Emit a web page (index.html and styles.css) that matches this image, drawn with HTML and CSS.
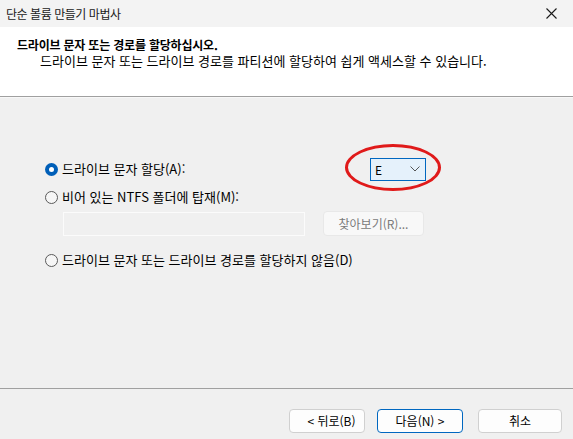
FILE: index.html
```html
<!DOCTYPE html>
<html lang="ko">
<head>
<meta charset="utf-8">
<title>단순 볼륨 만들기 마법사</title>
<link rel="stylesheet" href="styles.css">
</head>
<body>
<div class="window">
  <div class="titlebar">
    <span class="title">단순 볼륨 만들기 마법사</span>
    <span class="close">
      <svg width="11" height="11" viewBox="0 0 11 11"><path d="M0.5 0.5 L10.5 10.5 M10.5 0.5 L0.5 10.5" stroke="#1a1a1a" stroke-width="1.1" fill="none"/></svg>
    </span>
  </div>
  <div class="header">
    <div class="h-title">드라이브 문자 또는 경로를 할당하십시오.</div>
    <div class="h-sub">드라이브 문자 또는 드라이브 경로를 파티션에 할당하여 쉽게 액세스할 수 있습니다.</div>
  </div>
  <div class="content">
    <div class="row row1">
      <label class="opt"><span class="radio checked"></span><span>드라이브 문자 할당(A):</span></label>
      <div class="combo-wrap">
        <div class="combo"><span>E</span>
          <svg width="10" height="6" viewBox="0 0 10 6"><path d="M0.5 0.5 L5 5 L9.5 0.5" stroke="#555" stroke-width="1" fill="none"/></svg>
        </div>
        <div class="mark"></div>
      </div>
    </div>
    <div class="row row2">
      <label class="opt"><span class="radio"></span><span>비어 있는 NTFS 폴더에 탑재(M):</span></label>
    </div>
    <div class="row row-path">
      <div class="path"></div>
      <div class="btn disabled">찾아보기(R)...</div>
    </div>
    <div class="row row3">
      <label class="opt"><span class="radio"></span><span>드라이브 문자 또는 드라이브 경로를 할당하지 않음(D)</span></label>
    </div>
  </div>
  <div class="footer">
    <div class="btn b-back">&lt; 뒤로(B)</div>
    <div class="btn b-next">다음(N) &gt;</div>
    <div class="btn b-cancel">취소</div>
  </div>
</div>
</body>
</html>
```
FILE: styles.css
```css
* { box-sizing: border-box; }
html, body { margin: 0; padding: 0; }
body {
  width: 573px;
  height: 439px;
  overflow: hidden;
  font-family: "Noto Sans CJK KR", "Noto Sans", sans-serif;
  font-size: 12px;
  color: #000;
  background: #f0f0f0;
}
.window { display: flex; flex-direction: column; width: 573px; height: 439px; }
.titlebar {
  height: 27px;
  background: #f3f3f3;
  display: flex;
  align-items: center;
  justify-content: space-between;
  padding: 0 16px 0 6px;
}
.title { font-size: 12px; line-height: 16px; letter-spacing: -0.45px; color: #1a1a1a; }
.close { display: flex; width: 11px; height: 11px; }
.header {
  height: 70px;
  background: #fff;
  border-bottom: 1px solid #a0a0a0;
  box-shadow: 0 1px 0 #f8f8f8;
  padding: 10px 0 0 17px;
}
.h-title { font-weight: bold; line-height: 16px; letter-spacing: -0.2px; }
.h-sub { padding-left: 23px; line-height: 16px; font-size: 13px; }
.content {
  height: 292px;
  border-bottom: 1px solid #a0a0a0;
  padding: 60px 0 0 45px;
  display: flex;
  flex-direction: column;
}
.row { display: flex; align-items: center; }
.opt { display: flex; align-items: center; gap: 4px; line-height: 16px; font-size: 13px; }
.radio {
  width: 13px; height: 13px;
  border-radius: 50%;
  border: 1px solid #5a5a5a;
  background: #f6f6f6;
  flex: 0 0 13px;
}
.radio.checked { border: none; background: #005fb8; position: relative; }
.radio.checked::after {
  content: ""; position: absolute; left: 4px; top: 4px;
  width: 5px; height: 5px; border-radius: 50%; background: #fff;
}
.row1 { width: 381px; justify-content: space-between; height: 24px; }
.combo-wrap { position: relative; }
.combo {
  width: 56px; height: 23px;
  border: 1px solid #0067c0;
  background: #e5f1fb;
  display: flex; align-items: center; justify-content: space-between;
  padding: 0 5px 0 4px;
}
.mark {
  position: absolute; left: -25px; top: -14px;
  width: 96px; height: 47px;
  border: 3px solid #e01a1a; border-radius: 50%;
}
.row2 { margin-top: 8px; height: 16px; }
.row-path { margin-top: 6px; padding-left: 18px; gap: 18px; }
.path { width: 242px; height: 24px; border: 1px solid #fbfbfb; background: #f0f0f0; }
.btn {
  height: 24px; border: 1px solid #d0d0d0; border-radius: 4px; background: #fdfdfd;
  display: flex; align-items: center; justify-content: center; line-height: 16px;
}
.btn.disabled { width: 101px; height: 25px; color: #7a7a7a; background: #f8f8f8; border-color: #e8e8e8; }
.row3 { margin-top: 16px; height: 16px; }
.footer { flex: 1; display: flex; align-items: flex-start; padding: 20px 0 0 289px; }
.b-back { width: 76px; padding-left: 9px; }
.b-next { width: 86px; margin-left: 12px; border-color: #0067c0; }
.b-cancel { width: 84px; margin-left: 15px; }
```
